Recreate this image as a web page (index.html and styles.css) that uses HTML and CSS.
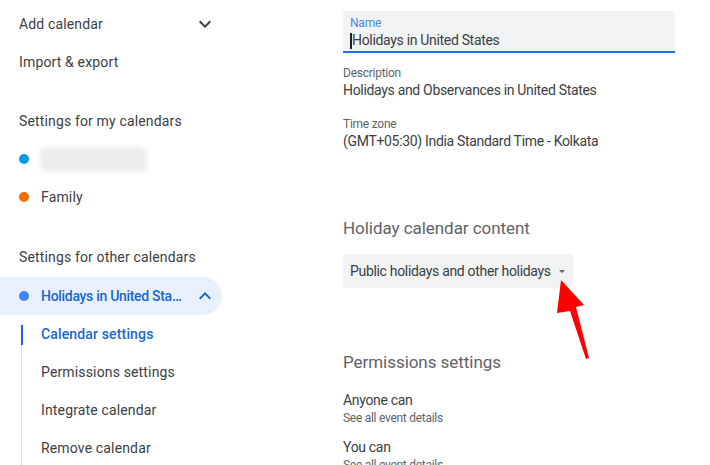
FILE: index.html
```html
<!DOCTYPE html>
<html lang="en">
<head>
<meta charset="utf-8">
<title>Calendar settings</title>
<link rel="stylesheet" href="styles.css">
</head>
<body>
<div class="page">
  <nav class="sidebar">
    <div class="nav-item">
      <span class="nav-text">Add calendar</span>
      <svg class="chev" viewBox="0 0 24 24" width="24" height="24"><path d="M16.59 8.59L12 13.17 7.41 8.59 6 10l6 6 6-6z"/></svg>
    </div>
    <div class="nav-item">
      <span class="nav-text">Import &amp; export</span>
    </div>

    <div class="nav-header">Settings for my calendars</div>
    <div class="nav-item">
      <span class="dot dot-peacock"></span>
      <span class="blurred"></span>
    </div>
    <div class="nav-item">
      <span class="dot dot-tangerine"></span>
      <span class="nav-text">Family</span>
    </div>

    <div class="nav-header nav-header-other">Settings for other calendars</div>
    <div class="nav-item nav-item-active">
      <span class="dot dot-blue"></span>
      <span class="nav-text ellipsis">Holidays in United States</span>
      <svg class="chev chev-blue" viewBox="0 0 24 24" width="24" height="24"><path d="M7.41 15.41L12 10.83l4.59 4.58L18 14l-6-6-6 6z"/></svg>
    </div>
    <div class="subnav">
      <div class="subitem subitem-active">Calendar settings</div>
      <div class="subitem">Permissions settings</div>
      <div class="subitem">Integrate calendar</div>
      <div class="subitem">Remove calendar</div>
    </div>
  </nav>

  <main class="main">
    <div class="field">
      <div class="field-label">Name</div>
      <div class="field-value"><span class="caret"></span>Holidays in United States</div>
    </div>

    <div class="info info-first">
      <div class="info-label">Description</div>
      <div class="info-value">Holidays and Observances in United States</div>
    </div>
    <div class="info">
      <div class="info-label">Time zone</div>
      <div class="info-value">(GMT+05:30) India Standard Time - Kolkata</div>
    </div>

    <h2 class="section-title">Holiday calendar content</h2>
    <div class="select">
      <span class="select-text">Public holidays and other holidays</span>
      <span class="tri"></span>
    </div>

    <h2 class="section-title section-title-perm">Permissions settings</h2>
    <div class="perm perm-first">
      <div class="perm-title">Anyone can</div>
      <div class="perm-sub">See all event details</div>
    </div>
    <div class="perm">
      <div class="perm-title">You can</div>
      <div class="perm-sub">See all event details</div>
    </div>
  </main>

  <svg class="arrow" viewBox="0 0 710 465" width="710" height="465">
    <polygon points="561,280 584,305 576,307 589,358 586,359 570,311 557,313" fill="#ff0000"/>
  </svg>
</div>
</body>
</html>
```

FILE: styles.css
```css
* { box-sizing: border-box; }

html, body {
  margin: 0;
  padding: 0;
  background: #ffffff;
}

body {
  font-family: Roboto, "Liberation Sans", sans-serif;
  font-size: 14px;
  color: #3c4043;
  width: 710px;
  height: 465px;
  overflow: hidden;
}

.page {
  display: flex;
  position: relative;
  width: 710px;
  height: 465px;
}

/* Sidebar */
.sidebar {
  width: 240px;
  flex: none;
  padding-top: 5px;
  letter-spacing: 0.15px;
}

.nav-item,
.nav-header {
  display: flex;
  align-items: center;
  height: 38px;
  width: 222px;
  padding-left: 19px;
  padding-right: 5px;
  line-height: 20px;
}

.nav-text {
  flex: 1;
  white-space: nowrap;
}

.nav-header {
  margin-top: 21px;
}

.nav-header-other {
  margin-top: 22px;
}

.chev {
  flex: none;
  fill: #3c4043;
  margin-left: 8px;
}

.chev-blue {
  fill: #1967d2;
}

.dot {
  width: 10px;
  height: 10px;
  border-radius: 50%;
  flex: none;
  margin-right: 12px;
}

.dot-peacock { background: #039be5; }
.dot-tangerine { background: #ef6c00; }
.dot-blue { background: #4285f4; }

.blurred {
  width: 107px;
  height: 25px;
  margin-left: -1px;
  border-radius: 6px;
  background: #ededed;
  filter: blur(2.5px);
}

.nav-item-active {
  margin-top: 1px;
  background: #e8f0fe;
  border-radius: 0 19px 19px 0;
  color: #1967d2;
  font-weight: 500;
  letter-spacing: -0.3px;
}

.ellipsis {
  overflow: hidden;
  text-overflow: ellipsis;
}

.subnav {
  margin-left: 21px;
  position: relative;
}

.subnav::before {
  content: "";
  position: absolute;
  left: 0;
  top: 10px;
  bottom: 0;
  width: 1px;
  background: #e0e0e0;
}

.subitem {
  position: relative;
  height: 38px;
  display: flex;
  align-items: center;
  padding-left: 20px;
  line-height: 20px;
}

.subitem-active {
  color: #1967d2;
  font-weight: 500;
}

.subitem-active::before {
  content: "";
  position: absolute;
  left: 0;
  top: 10px;
  width: 1.5px;
  height: 20px;
  background: #1967d2;
}

/* Main */
.main {
  margin-left: 103px;
  width: 332px;
  flex: none;
  letter-spacing: -0.32px;
}

.field {
  margin-top: 11px;
  background: #f1f3f4;
  border-radius: 4px 4px 0 0;
  border-bottom: 2px solid #1a73e8;
  padding: 5px 7px 1px;
}

.field-label {
  font-size: 12px;
  line-height: 15px;
  color: #4a86e8;
  letter-spacing: -0.2px;
}

.field-value {
  line-height: 19px;
  color: #3c4043;
  display: flex;
  align-items: center;
}

.caret {
  display: inline-block;
  width: 2px;
  height: 16px;
  background: #202124;
}

.info { margin-top: 18px; }
.info.info-first { margin-top: 13px; }

.info-label {
  font-size: 12px;
  line-height: 15px;
  color: #5f6368;
  letter-spacing: -0.25px;
}

.info-value {
  line-height: 18px;
  color: #3c4043;
}

.section-title {
  margin: 66px 0 0;
  font-size: 17px;
  line-height: 24px;
  font-weight: 400;
  letter-spacing: -0.05px;
  color: #5f6368;
}

.section-title-perm {
  margin-top: 62px;
}

.select {
  margin-top: 14px;
  width: 230px;
  height: 34px;
  background: #f1f3f4;
  border-radius: 4px;
  display: flex;
  align-items: center;
  justify-content: space-between;
  padding: 0 8px 0 7px;
  color: #3c4043;
}

.select-text {
  white-space: nowrap;
}

.tri {
  flex: none;
  width: 0;
  height: 0;
  border-left: 3px solid transparent;
  border-right: 3px solid transparent;
  border-top: 3px solid #5f6368;
}

.perm { margin-top: 11px; }
.perm.perm-first { margin-top: 16px; }

.perm-title {
  line-height: 20px;
  color: #3c4043;
}

.perm-sub {
  font-size: 12px;
  line-height: 16px;
  color: #5f6368;
  letter-spacing: -0.28px;
}

.arrow {
  position: absolute;
  left: 0;
  top: 0;
  pointer-events: none;
}
```
